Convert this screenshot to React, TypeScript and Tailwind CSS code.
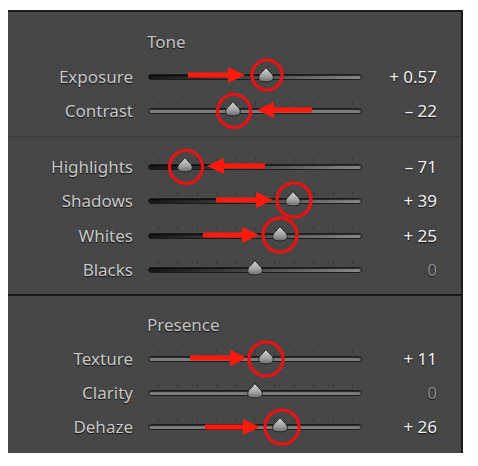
import React from 'react';

type Row = {
  label: string;
  value: number;
  text: string;
  range: number;
  dark?: boolean;
  ticks?: boolean;
};

const tone: Row[] = [
  { label: 'Exposure', value: 0.57, text: '+ 0.57', range: 5, dark: true, ticks: false },
  { label: 'Contrast', value: -22, text: '\u2013 22', range: 100, ticks: true },
];

const levels: Row[] = [
  { label: 'Highlights', value: -71, text: '\u2013 71', range: 100, dark: true, ticks: true },
  { label: 'Shadows', value: 39, text: '+ 39', range: 100, dark: true, ticks: true },
  { label: 'Whites', value: 25, text: '+ 25', range: 100, dark: true, ticks: true },
  { label: 'Blacks', value: 0, text: '0', range: 100, dark: true, ticks: true },
];

const presence: Row[] = [
  { label: 'Texture', value: 11, text: '+ 11', range: 100, ticks: true },
  { label: 'Clarity', value: 0, text: '0', range: 100, ticks: true },
  { label: 'Dehaze', value: 26, text: '+ 26', range: 100, ticks: true },
];

const TICKS = [0, 1, 2, 3, 4, 5, 6, 7, 8, 9, 10];

function Thumb() {
  return (
    <svg width="17" height="17" viewBox="0 0 17 17" className="block">
      <defs>
        <linearGradient id="thumbFill" x1="0" y1="0" x2="0" y2="1">
          <stop offset="0" stopColor="#d6d6d6" />
          <stop offset="0.6" stopColor="#a4a4a4" />
          <stop offset="1" stopColor="#6a6a6a" />
        </linearGradient>
      </defs>
      <path
        d="M8.5 1 C9.6 4.5 15.8 7.5 15.8 11.6 C15.8 14.6 13 15.9 8.5 15.9 C4 15.9 1.2 14.6 1.2 11.6 C1.2 7.5 7.4 4.5 8.5 1 Z"
        fill="url(#thumbFill)"
        stroke="#262626"
        strokeWidth="1"
      />
    </svg>
  );
}

function Slider({ row }: { row: Row }) {
  // thumb travels 98px each side of the centre
  const left = 107 + (row.value / row.range) * 98;
  return (
    <div className="relative w-[214px] h-full">
      {row.ticks && (
        <div className="absolute left-0 right-0 top-1/2 -mt-[9px] h-[3px]">
          {TICKS.map((i) => (
            <span
              key={i}
              className="absolute top-0 w-px h-[3px] bg-[#383838]"
              style={{ left: 10 + i * 19.4 }}
            ></span>
          ))}
        </div>
      )}
      <div
        className={
          'absolute left-0 right-0 top-1/2 -translate-y-1/2 h-[6px] rounded-full border border-[#1d1d1d] shadow-[inset_0_1px_1px_rgba(0,0,0,0.7)] ' +
          (row.dark
            ? 'bg-gradient-to-r from-[#161616] to-[#8a8a8a]'
            : 'bg-[#7e7e7e]')
        }
      ></div>
      <div
        className="absolute top-1/2 -translate-y-[11px] -translate-x-1/2"
        style={{ left }}
      >
        <Thumb />
      </div>
    </div>
  );
}

function SliderRow({ row, h }: { row: Row; h: string }) {
  return (
    <div className={'flex items-center ' + h}>
      <div className="w-[125px] text-right text-[17px] text-[#c8c8c8] [text-shadow:0_1px_1px_rgba(0,0,0,0.8)]">
        {row.label}
      </div>
      <div className="ml-[15px] h-full">
        <Slider row={row} />
      </div>
      <div
        className={
          'w-[75px] text-right text-[17px] [text-shadow:0_1px_1px_rgba(0,0,0,0.8)] ' +
          (row.value === 0 ? 'text-[#8c8c8c]' : 'text-[#f2f2f2]')
        }
      >
        {row.text}
      </div>
    </div>
  );
}

function Heading({ title, h }: { title: string; h: string }) {
  return (
    <div className={'flex items-center pl-[139px] text-[17px] text-[#c4c4c4] [text-shadow:0_1px_1px_rgba(0,0,0,0.8)] ' + h}>
      {title}
    </div>
  );
}

function Arrow({ from, tip, y }: { from: number; tip: number; y: number }) {
  const dir = tip > from ? 1 : -1;
  const base = tip - dir * 17;
  return (
    <g fill="#ff1a0d">
      <rect x={Math.min(from, base)} y={y - 2.5} width={Math.abs(base - from)} height={5} />
      <polygon points={`${base},${y - 8} ${tip},${y} ${base},${y + 8}`} />
    </g>
  );
}

function Marks() {
  const circles = [
    [267, 75, 15],
    [234, 111, 16.5],
    [186, 167, 16.5],
    [294, 200, 17],
    [280, 235, 17],
    [266, 359, 17],
    [282, 427, 17],
  ];
  return (
    <svg
      className="absolute top-0 left-0 pointer-events-none"
      width="478"
      height="466"
      viewBox="0 0 478 466"
    >
      <Arrow from={188} tip={245} y={75} />
      <Arrow from={312} tip={257} y={110} />
      <Arrow from={265} tip={207} y={166} />
      <Arrow from={216} tip={273} y={200} />
      <Arrow from={203} tip={259} y={235} />
      <Arrow from={190} tip={247} y={358} />
      <Arrow from={205} tip={260} y={427} />
      {circles.map(([cx, cy, r], i) => (
        <circle key={i} cx={cx} cy={cy} r={r} fill="none" stroke="#ee1111" strokeWidth="3.2" />
      ))}
    </svg>
  );
}

export default function App() {
  return (
    <div className="relative w-[478px] h-[466px] bg-white pt-[10px] pl-[8px] font-['Noto_Sans',sans-serif]">
      <div className="w-[455px] h-[443px] bg-[#474747] border-t-2 border-r-2 border-[#1c1c1c] flex flex-col">
        <div className="pt-[12.75px] h-[124px]">
          <Heading title="Tone" h="h-[34.5px]" />
          {tone.map((r) => (
            <SliderRow key={r.label} row={r} h="h-[34.5px]" />
          ))}
        </div>
        <div className="h-px bg-[#3a3a3a]"></div>
        <div className="pt-[12.25px] h-[157px]">
          {levels.map((r) => (
            <SliderRow key={r.label} row={r} h="h-[34.5px]" />
          ))}
        </div>
        <div className="h-[2px] bg-[#181818]"></div>
        <div className="pt-[12px] flex-1">
          <Heading title="Presence" h="h-[34px]" />
          {presence.map((r) => (
            <SliderRow key={r.label} row={r} h="h-[34px]" />
          ))}
        </div>
      </div>
      <Marks />
    </div>
  );
}
